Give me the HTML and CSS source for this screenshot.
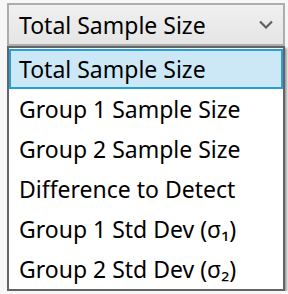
FILE: index.html
```html
<!DOCTYPE html>
<html lang="en">
<head>
    <meta charset="UTF-8">
    <title>Solve For</title>
    <link rel="stylesheet" href="styles.css">
</head>
<body>
    <div class="picker">
        <div class="combo">
            <span class="combo-text">Total Sample Size</span>
            <svg class="chevron" width="14" height="9" viewBox="0 0 14 9">
                <polyline points="1,1.5 7,7.5 13,1.5" fill="none" stroke="#606060" stroke-width="2.2"/>
            </svg>
        </div>
        <ul class="list">
            <li class="item selected">Total Sample Size</li>
            <li class="item">Group 1 Sample Size</li>
            <li class="item">Group 2 Sample Size</li>
            <li class="item">Difference to Detect</li>
            <li class="item">Group 1 Std Dev (σ₁)</li>
            <li class="item">Group 2 Std Dev (σ₂)</li>
        </ul>
    </div>
</body>
</html>
```

FILE: styles.css
```css
body {
    margin: 0;
    background: #f7f7f7;
    font-family: "Noto Sans", "Open Sans", sans-serif;
    color: #000;
}
.picker {
    width: 278px;
    padding: 3px 0 0 7px;
}
.combo {
    height: 39px;
    border: 2px solid #adadad;
    background: linear-gradient(#f0f0f0, #e5e5e5);
    display: flex;
    align-items: center;
    justify-content: space-between;
    padding: 0 10px 0 10px;
    font-size: 23px;
}
.combo-text {
    margin-top: 1px;
}
.chevron {
    margin-top: 0;
}
.list {
    list-style: none;
    margin: 0;
    padding: 1px 0 0 0;
    background: #fff;
    border: 2px solid #646464;
    box-shadow: 2px 2px 2px rgba(0, 0, 0, 0.35);
}
.item {
    height: 36px;
    display: flex;
    align-items: center;
    padding: 0 8px;
    border: 2px solid transparent;
    font-size: 23px;
}
.selected {
    background: #cce8f7;
    border-color: #26a0da;
}
```
